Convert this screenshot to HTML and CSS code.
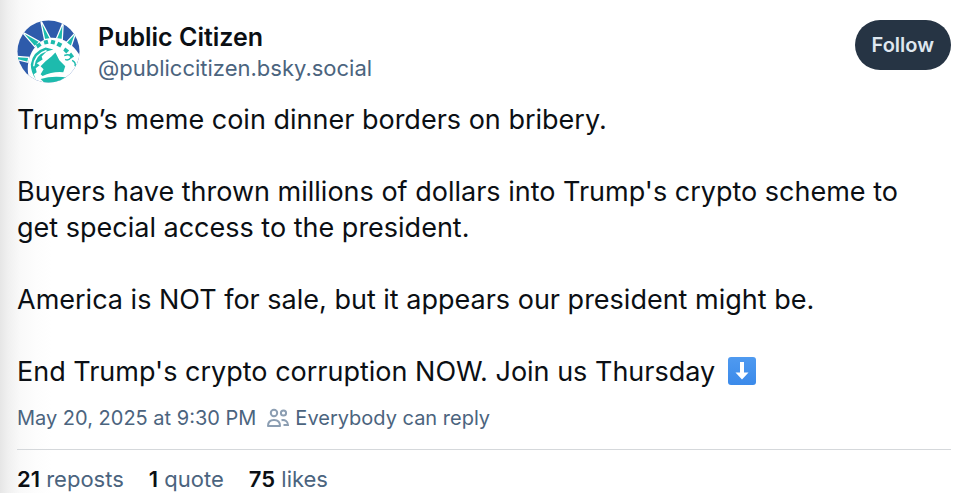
FILE: index.html
```html
<!DOCTYPE html>
<html lang="en">
<head>
<meta charset="utf-8">
<meta name="viewport" content="width=device-width, initial-scale=1">
<title>Public Citizen</title>
<link rel="stylesheet" href="styles.css">
</head>
<body>
<article class="post">
  <header class="post-header">
    <svg class="avatar" viewBox="0 0 64 64" aria-hidden="true">
      <defs><clipPath id="disc"><circle cx="32" cy="32" r="31.5"/></clipPath></defs>
      <g clip-path="url(#disc)">
        <rect width="64" height="64" fill="#2e5bab"/>
        <path d="M14 64C6 46 14 22 34 18Q52 17 64 36V64Z" fill="#fff"/>
        <g fill="#1dbbad" stroke="#fff" stroke-width="1.300">
          <path d="M5 12L23 22L18 27Z"/>
          <path d="M24 0L34 19L28 20Z"/>
          <path d="M47 2L46 20L40 19Z"/>
          <path d="M60 12L55 27L50 23Z"/>
          <path d="M-1 37L12 38L11 43L-1 40Z"/>
        </g>
        <g fill="#1dbbad">
          <path d="M19 25l4-2 2 3-4 3z"/>
          <path d="M27 21l4-1 1 4-4 1z"/>
          <path d="M35 20l4 1-1 4-4-1z"/>
          <path d="M42 22l4 2-2 4-4-2z"/>
          <path d="M49 28l4 3-3 3-3-3z"/>
          <path d="M55 33l3 4-3 2-2-4z"/>
          <path d="M39 33L43 41L49 47L47 53Q36 52 26 57L24 55L27 50L24 47L29 42L35 37Z"/>
          <path d="M14 45Q16 32 29 28L37 30L30 32L25 37L26 40L20 44L23 46L19 49L20 53L17 55L19 60Q14 53 14 45Z"/>
          <path d="M24 60Q37 56 53 59L44 64H28Z"/>
        </g>
        <path d="M48 36Q54 34 55 38Q52 42 49 40M56 41Q60 43 59 47" fill="none" stroke="#1dbbad" stroke-width="1.500"/>
        <path d="M17 47Q18 35 30 31" fill="none" stroke="#fff" stroke-width="1.500"/>
      </g>
    </svg>
    <div class="author">
      <strong class="name">Public Citizen</strong>
      <span class="handle">@publiccitizen.bsky.social</span>
    </div>
    <button class="follow" type="button">Follow</button>
  </header>
  <div class="content">
    <p>Trump’s meme coin dinner borders on bribery.</p>
    <p>Buyers have thrown millions of dollars into Trump's crypto scheme to get special access to the president.</p>
    <p>America is NOT for sale, but it appears our president might be.</p>
    <p>End Trump's crypto corruption NOW. Join us Thursday <svg class="down" viewBox="0 0 28 28" role="img" aria-label="Down arrow">
      <defs><linearGradient id="blue" x2="0" y2="1"><stop stop-color="#4f9af0"/><stop offset="1" stop-color="#3b8aea"/></linearGradient></defs>
      <rect width="28" height="28" rx="3" fill="url(#blue)"/>
      <path d="M12 5h4v10.500h4.500L14 22.500L7.500 15.500H12Z" fill="#fff"/>
    </svg></p>
  </div>
  <div class="meta">
    <time datetime="2025-05-20T21:30">May 20, 2025 at 9:30 PM</time>
    <span class="replies">
      <svg class="people" viewBox="0 0 24 20" fill="none" stroke="#8c9eb2" stroke-width="2" aria-hidden="true">
        <circle cx="8" cy="5" r="3.200"/><circle cx="17.500" cy="5" r="2.600"/>
        <path d="M2 18C2 14 4.500 12 8 12S14 14 14 18Z" stroke-linejoin="round"/>
        <path d="M15.500 12.200C19 11.400 22 13.600 22 17H17.500"/>
      </svg>
      Everybody can reply
    </span>
  </div>
  <footer class="stats">
    <span><b>21</b> reposts</span>
    <span><b>1</b> quote</span>
    <span><b>75</b> likes</span>
  </footer>
</article>
</body>
</html>
```
FILE: styles.css
```css
* { box-sizing: border-box; }

body {
  margin: 0;
  min-height: 100vh;
  color: #0b0f14;
  font-family: Inter, "Liberation Sans", sans-serif;
  background: linear-gradient(to right, #e6e6e6 0, #f0f0f0 8px, #f9f9f9 20px, #fdfdfd 36px, #fff 52px);
}

.post { padding: 20px 21px 0 17px; }

.post-header {
  display: flex;
  align-items: flex-start;
  gap: 18px;
}

.avatar {
  flex: none;
  width: 63px;
  height: 63px;
}

.author {
  flex: 1;
  display: flex;
  flex-direction: column;
  padding-top: 2px;
}

.name {
  font-size: 25px;
  font-weight: 600;
  line-height: 31px;
}

.handle {
  color: #4b647e;
  font-size: 22px;
  line-height: 31px;
}

.follow {
  height: 50px;
  padding: 0 17px;
  border: 0;
  border-radius: 25px;
  background: #263444;
  color: #dfe7ef;
  font: 600 20px Inter, "Liberation Sans", sans-serif;
}

.content {
  display: grid;
  gap: 36px;
  margin-top: 18px;
  padding-right: 20px;
  font-size: 27px;
  line-height: 36px;
}

.content p { margin: 0; }

.down {
  width: 28px;
  height: 28px;
  margin-left: 5px;
  vertical-align: -4px;
}

.meta {
  display: flex;
  align-items: center;
  gap: 10px;
  padding: 15px 0 18px;
  border-bottom: 1px solid #d5d8db;
  color: #4b647e;
  font-size: 20px;
  line-height: 26px;
}

.replies {
  display: flex;
  align-items: center;
  gap: 5px;
}

.people {
  width: 24px;
  height: 20px;
}

.stats {
  display: flex;
  gap: 25px;
  padding-top: 15px;
  color: #4b647e;
  font-size: 22px;
  line-height: 28px;
}

.stats b {
  color: #0b0f14;
  font-weight: 600;
}
```
